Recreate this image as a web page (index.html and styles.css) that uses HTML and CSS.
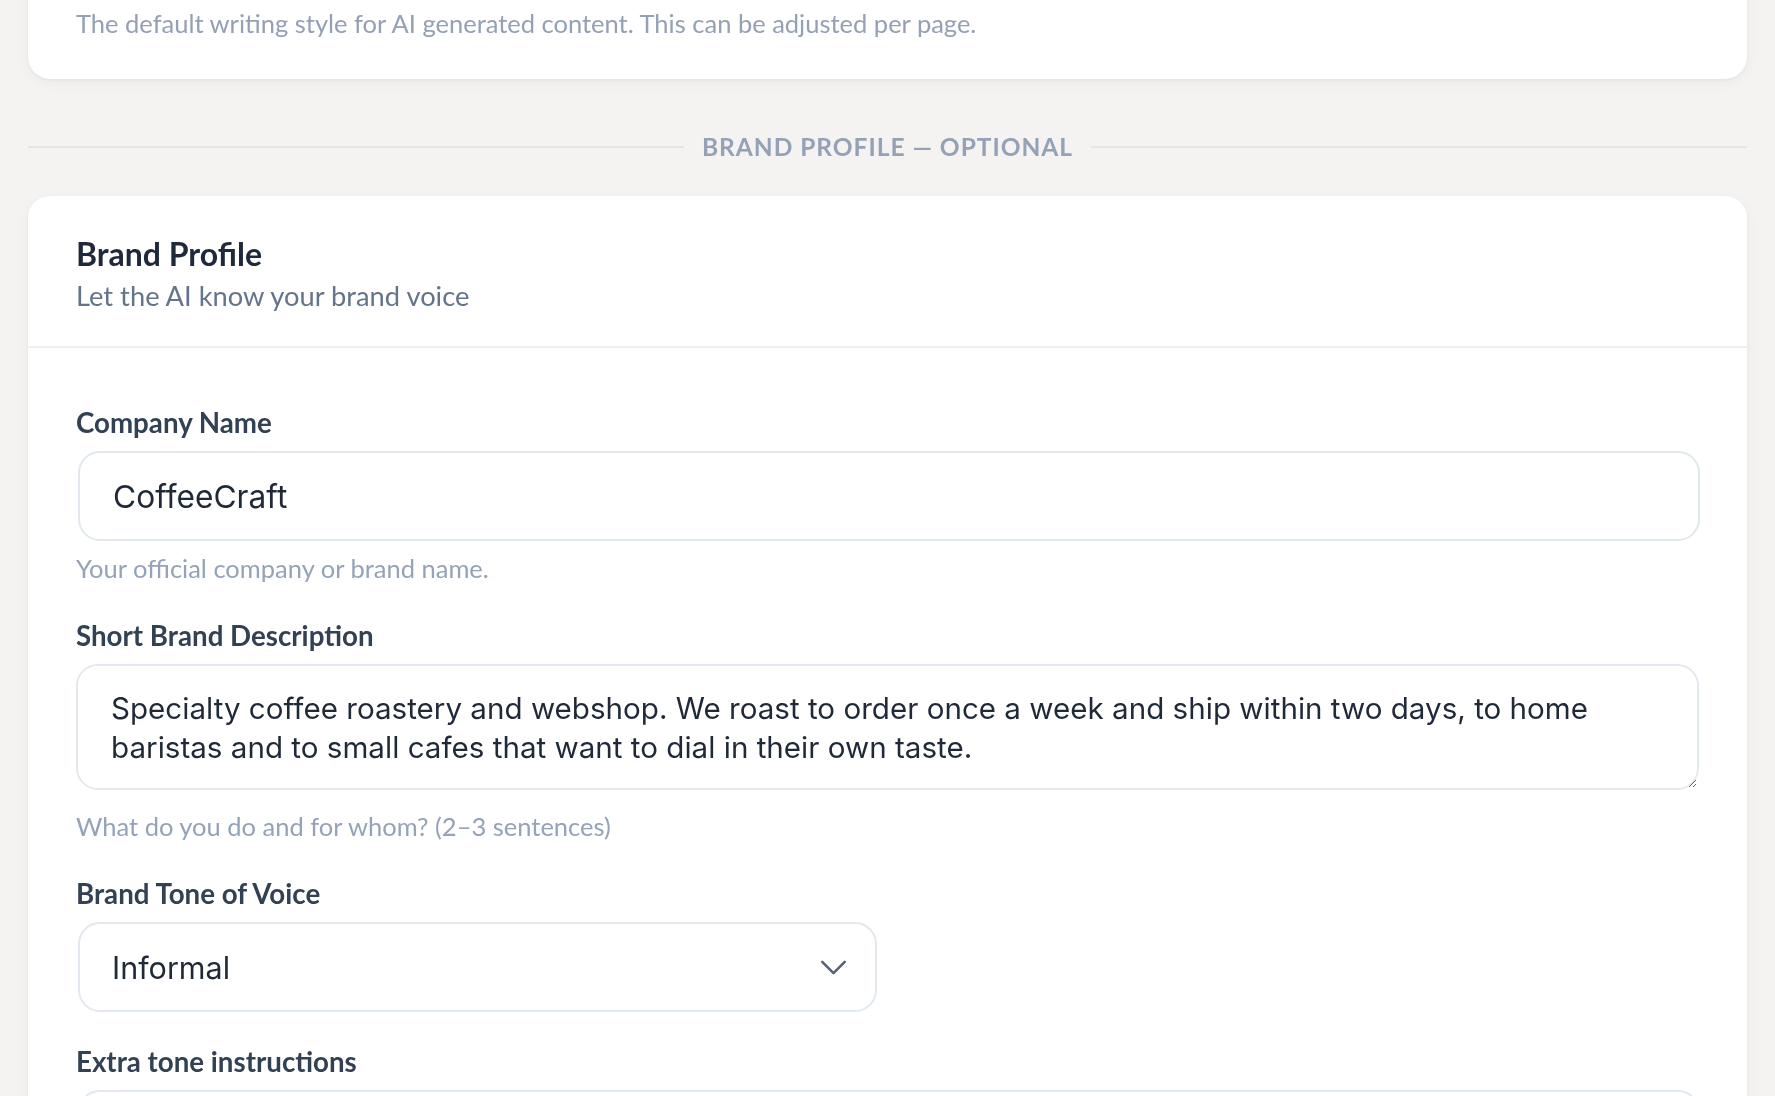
FILE: index.html
```html
<!DOCTYPE html>
<html lang="en">
<head>
<meta charset="utf-8">
<title>Brand Profile</title>
<link rel="stylesheet" href="styles.css">
</head>
<body>
<div class="page">
  <section class="card card-top">
    <p class="hint hint-top">The default writing style for AI generated content. This can be adjusted per page.</p>
  </section>

  <div class="divider">
    <span class="divider-line"></span>
    <span class="divider-text">Brand Profile — Optional</span>
    <span class="divider-line"></span>
  </div>

  <section class="card">
    <header class="card-head">
      <h2 class="card-title">Brand Profile</h2>
      <p class="card-sub">Let the AI know your brand voice</p>
    </header>
    <div class="card-body">
      <div class="field">
        <label class="label" for="company">Company Name</label>
        <input class="input" id="company" type="text" value="CoffeeCraft">
        <p class="hint">Your official company or brand name.</p>
      </div>
      <div class="field">
        <label class="label" for="desc">Short Brand Description</label>
        <textarea class="textarea" id="desc">Specialty coffee roastery and webshop. We roast to order once a week and ship within two days, to home baristas and to small cafes that want to dial in their own taste.</textarea>
        <p class="hint hint-ta">What do you do and for whom? (2–3 sentences)</p>
      </div>
      <div class="field">
        <label class="label" for="tone">Brand Tone of Voice</label>
        <div class="select-wrap">
          <select class="select" id="tone">
            <option>Informal</option>
            <option>Formal</option>
            <option>Friendly</option>
          </select>
          <svg class="chev" width="27" height="27" viewBox="0 0 24 24" fill="none" stroke="currentColor" stroke-width="2.2" stroke-linecap="round" stroke-linejoin="round" aria-hidden="true"><polyline points="2 7 12 17 22 7"></polyline></svg>
        </div>
      </div>
      <div class="field">
        <label class="label" for="extra">Extra tone instructions</label>
        <input class="input" id="extra" type="text" value="">
      </div>
    </div>
  </section>
</div>
</body>
</html>
```
FILE: styles.css
```css
html, body {
  margin: 0;
  padding: 0;
  height: 100%;
}
body {
  background: #f4f3f1;
  font-family: "Lato", "Inter", "Noto Sans", sans-serif;
  color: #1e293b;
  overflow: hidden;
}
.page {
  height: 100vh;
  overflow: hidden;
  padding: 0 28px;
}
.card {
  background: #ffffff;
  border-radius: 22px;
  box-shadow: 0 1px 3px rgba(40, 30, 20, 0.05), 0 4px 14px rgba(40, 30, 20, 0.04);
}
.card-top {
  margin-top: -40px;
  padding: 46px 48px 38px;
}
.hint {
  margin: 10px 0 0;
  font-size: 25.5px;
  line-height: 35px;
  color: #94a3b8;
}
.hint-top {
  margin: 0;
  color: #94a0b4;
}
.hint-ta {
  margin-top: 19px;
}
.divider {
  display: flex;
  align-items: center;
  gap: 18px;
  height: 35px;
  margin: 50px 0 32px;
}
.divider-line {
  flex: 1;
  height: 2px;
  background: #e7e5e2;
}
.divider-text {
  font-size: 24.5px;
  line-height: 35px;
  font-weight: 700;
  text-transform: uppercase;
  letter-spacing: 0.04em;
  color: #94a1b6;
  white-space: nowrap;
}
.card-head {
  padding: 37px 48px 29px;
  border-bottom: 2px solid #eeeff1;
}
.card-title {
  margin: 0;
  font-size: 32px;
  line-height: 42px;
  font-weight: 700;
  color: #1e293b;
}
.card-sub {
  margin: 0;
  font-size: 27.3px;
  line-height: 42px;
  color: #64748b;
}
.card-body {
  padding: 54px 48px 40px;
}
.field {
  margin-bottom: 29px;
}
.label {
  display: block;
  margin-bottom: 7px;
  font-size: 27.7px;
  line-height: 42px;
  font-weight: 700;
  color: #334155;
}
.input {
  display: block;
  box-sizing: border-box;
  width: calc(100% - 1px);
  height: 90px;
  margin: 0 0 0 2px;
  padding: 0 33px;
  border: 2px solid #e2e8f0;
  border-radius: 22px;
  background: #ffffff;
  font-family: "Inter", "Noto Sans", sans-serif;
  font-size: 31.7px;
  color: #1f2937;
  outline: none;
}
.textarea {
  display: block;
  box-sizing: border-box;
  width: 100%;
  height: 126px;
  margin: 0;
  padding: 23px 33px;
  border: 2px solid #e2e8f0;
  border-radius: 22px;
  background: #ffffff;
  font-family: "Inter", "Noto Sans", sans-serif;
  font-size: 29.6px;
  line-height: 38.5px;
  color: #1f2937;
  resize: vertical;
  outline: none;
}
.select-wrap {
  display: flex;
  align-items: center;
  box-sizing: border-box;
  width: 799px;
  height: 90px;
  margin-left: 2px;
  padding: 0 28px 0 0;
  border: 2px solid #e2e8f0;
  border-radius: 22px;
  background: #ffffff;
}
.select {
  flex: 1;
  height: 100%;
  padding: 0 0 0 32px;
  border: none;
  background: transparent;
  -webkit-appearance: none;
  appearance: none;
  font-family: "Inter", "Noto Sans", sans-serif;
  font-size: 30.5px;
  color: #1f2937;
  outline: none;
}
.chev {
  flex: none;
  color: #556274;
}
```
